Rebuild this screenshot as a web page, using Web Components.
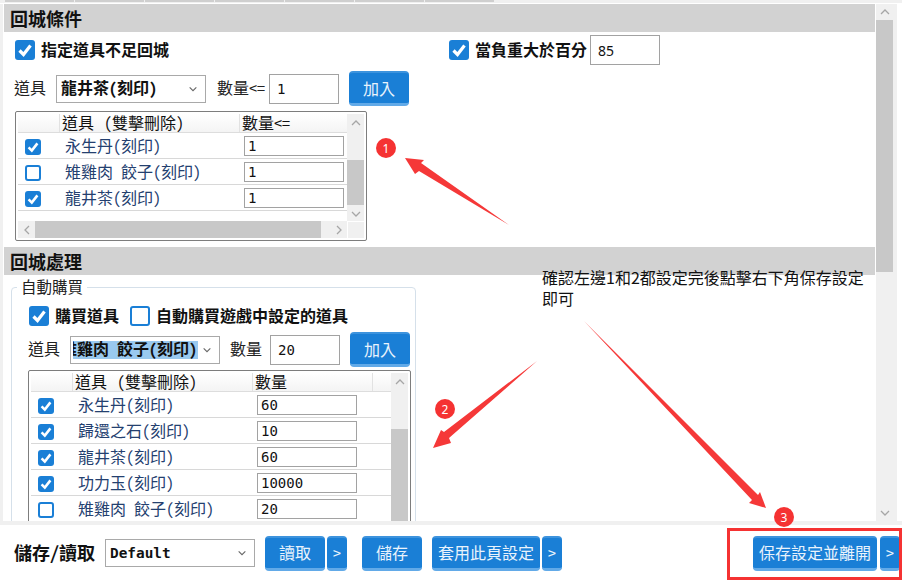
<!DOCTYPE html>
<html lang="zh-Hant">
<head>
<meta charset="utf-8">
<title>回城設定</title>
<style>
  html, body { margin: 0; padding: 0; background: #fff; }
  body {
    font-family: "Noto Sans CJK TC", "DejaVu Sans Mono", sans-serif;
    font-size: 16px;
    font-feature-settings: "hwid";
    color: #111;
    overflow: hidden;
  }
</style>
</head>
<body>
<settings-page></settings-page>

<template id="page-tpl">
  <style>
    :host { display: block; position: relative; width: 902px; height: 581px; overflow: hidden; background: #fff; }
    .tabs { height: 4px; box-sizing: border-box; border-top: 2px solid transparent; background: #f0f0f0; border-bottom: 1px solid #fff; position: relative; }
    .tab-row { display: flex; gap: 1px; position: absolute; left: 5px; top: -2px; }
    .tab-row i { width: 69px; height: 2px; background: #cfcfcf; }
    .middle { display: flex; height: 517px; }
    .gutter { width: 3px; background: #f0f0f0; border-right: 1px solid #fff; }
    .main { width: 871px; padding-right: 1px; overflow: hidden; background: #fff; }
    .gap { height: 4px; background: #f0f0f0; }
    .sec-body { padding: 0 0 0 11px; height: 215px; box-sizing: border-box; }
    .row-a { display: flex; align-items: center; height: 30px; padding-top: 3px; }
    .row-a .right { margin-left: 280px; }
    .auto { margin-left: 7px; width: 405px; }
    .auto-checks { display: flex; align-items: center; gap: 6px; height: 24px; padding: 1px 0 0 17px; }
    .auto-checks check-box + check-box { margin-left: 5px; }
    .t1 { margin-top: 5px; }
    .t2 { margin: 3px 0 0 16px; }
    .side { width: 21px; height: 517px; }
  </style>
  <div class="tabs"><div class="tab-row"><i></i><i></i><i></i><i></i><i></i><i></i><i></i></div></div>
  <div class="middle">
    <div class="gutter"></div>
    <div class="main">
      <section-bar>回城條件</section-bar>
      <div class="sec-body">
        <div class="row-a">
          <check-box checked bold>指定道具不足回城</check-box>
          <check-box class="right" checked bold>當負重大於百分</check-box>
          <num-input value="85" plain style="margin-left:3px"></num-input>
        </div>
        <form-row label="道具" qty="數量&lt;=" sel="龍井茶(刻印)" value="1" bold-sel style="margin:6px 0 0 -1px"></form-row>
        <item-grid class="t1" width="352" height="130" qty-col="108" qty-label="數量&lt;=" thumb-v="29,45" thumb-h="0,286">
          <grid-row name="永生丹(刻印)" value="1" checked></grid-row>
          <grid-row name="雉雞肉 餃子(刻印)" value="1"></grid-row>
          <grid-row name="龍井茶(刻印)" value="1" checked></grid-row>
        </item-grid>
      </div>
      <section-bar>回城處理</section-bar>
      <group-box class="auto" legend="自動購買">
        <div class="auto-checks">
          <check-box checked bold>購買道具</check-box>
          <check-box bold>自動購買遊戲中設定的道具</check-box>
        </div>
        <form-row label="道具" qty="數量" sel="雉雞肉 餃子(刻印)" value="20" bold-sel selected style="margin:4px 0 0 16px"></form-row>
        <item-grid class="t2" width="383" height="200" qty-col="138" qty-label="數量" thumb-v="39,100" extra-col no-h>
          <grid-row name="永生丹(刻印)" value="60" checked></grid-row>
          <grid-row name="歸還之石(刻印)" value="10" checked></grid-row>
          <grid-row name="龍井茶(刻印)" value="60" checked></grid-row>
          <grid-row name="功力玉(刻印)" value="10000" checked></grid-row>
          <grid-row name="雉雞肉 餃子(刻印)" value="20"></grid-row>
        </item-grid>
      </group-box>
    </div>
    <scroll-bar class="side" orient="v" thumb="0,252" arrow="16" thumb-width="17"></scroll-bar>
  </div>
  <div class="gap"></div>
  <save-bar></save-bar>
  <call-outs></call-outs>
</template>

<script>
  function makeShadow(host, html) {
    host.attachShadow({ mode: 'open' });
    host.shadowRoot.innerHTML = html;
  }

  const chevrons = {
    up: '<polyline points="2,8 6,4 10,8"/>',
    down: '<polyline points="2,4 6,8 10,4"/>',
    left: '<polyline points="8,2 4,6 8,10"/>',
    right: '<polyline points="4,2 8,6 4,10"/>',
  };
  function chevron(dir, color = '#a6a6a6', size = 12) {
    return `<svg width="${size}" height="${size}" viewBox="0 0 12 12" fill="none" stroke="${color}" stroke-width="1.3">${chevrons[dir]}</svg>`;
  }

  class SettingsPage extends HTMLElement {
    constructor() {
      super();
      this.attachShadow({ mode: 'open' });
      this.shadowRoot.appendChild(document.getElementById('page-tpl').content.cloneNode(true));
    }
  }

  class SectionBar extends HTMLElement {
    connectedCallback() {
      makeShadow(this, `
        <style>
          :host { display: flex; align-items: center; height: 28px; padding-left: 6px; background: #d2d2d2; font-size: 18px; font-weight: 700; color: #111; }
        </style>
        <slot></slot>`);
    }
  }

  class CheckBox extends HTMLElement {
    connectedCallback() {
      const size = this.getAttribute('size') || 20;
      const on = this.hasAttribute('checked');
      const tick = on ? '<svg viewBox="0 0 20 20" fill="none" stroke="#fff" stroke-width="3.2"><polyline points="4.5,10.5 8.5,14.5 15.5,5.5"/></svg>' : '';
      makeShadow(this, `
        <style>
          :host { display: inline-flex; align-items: center; gap: 6px; font-weight: ${this.hasAttribute('bold') ? 700 : 400}; white-space: nowrap; }
          .box { width: ${size}px; height: ${size}px; box-sizing: border-box; border-radius: 3px; background: ${on ? '#1a7fd6' : '#fff'}; border: ${on ? 0 : '2px solid #1a7fd6'}; flex: none; }
          .txt { line-height: 22px; padding-bottom: 2px; }
          svg { display: block; width: 100%; height: 100%; }
        </style>
        <span class="box">${tick}</span>${this.textContent.trim() ? '<span class="txt"><slot></slot></span>' : ''}`);
    }
  }

  class NumInput extends HTMLElement {
    connectedCallback() {
      const small = this.hasAttribute('small');
      const plain = this.hasAttribute('plain');
      makeShadow(this, `
        <style>
          :host { display: inline-flex; align-items: center; box-sizing: border-box; flex: none; background: #fff;
            width: ${small ? 100 : 70}px; height: ${small ? 20 : 30}px; border: 1px solid #a2a2a2;
            padding-left: ${small ? 3 : 7}px; color: #111;
            font-family: ${plain ? '"Noto Sans", sans-serif' : '"DejaVu Sans Mono", monospace'}; font-size: 14px; }
        </style>
        <span>${this.getAttribute('value')}</span>`);
    }
  }

  class DropSelect extends HTMLElement {
    connectedCallback() {
      const bold = this.hasAttribute('bold');
      const selected = this.hasAttribute('selected');
      const mono = this.hasAttribute('mono');
      makeShadow(this, `
        <style>
          :host { display: inline-flex; align-items: center; box-sizing: border-box; flex: none; width: 150px; height: 28px; border: 1px solid #a9a9a9; background: #fff; padding-left: ${selected ? 2 : 4}px; font-weight: ${bold ? 700 : 400}; }
          .clip { width: 125px; height: 18px; line-height: 14px; white-space: pre; ${selected ? 'overflow-x: clip; background: #99c9ef;' : ''} }
          .clip span { ${selected ? 'margin-left: -12px; display: inline-block;' : ''} ${mono ? 'font-family: "DejaVu Sans Mono", monospace; font-size: 14.4px;' : ''} }
          .arrow { margin-left: auto; margin-right: 7px; display: flex; }
        </style>
        <div class="clip"><span>${this.getAttribute('text')}</span></div>
        <span class="arrow">${chevron('down', '#666', 10)}</span>`);
    }
  }

  class BlueButton extends HTMLElement {
    connectedCallback() {
      const w = this.getAttribute('w') || 60;
      makeShadow(this, `
        <style>
          :host { display: inline-flex; align-items: center; justify-content: center; box-sizing: border-box; flex: none;
            width: ${w}px; height: 35px; border-radius: 4px; background: #1a7fd6; color: #e9f3fc; font-size: 16px;
            border-top: 2px solid #3d93dd; border-bottom: 3px solid #62aae8; white-space: nowrap; padding-bottom: 1px; }
        </style>
        <slot></slot>`);
    }
  }

  class FormRow extends HTMLElement {
    connectedCallback() {
      const a = n => this.getAttribute(n);
      const wide = a('qty').length > 2;
      makeShadow(this, `
        <style>
          :host { display: flex; align-items: center; height: 35px; }
          .lab { color: #222; padding-bottom: 4px; }
          drop-select { margin-left: 10px; }
          .qty { margin-left: ${wide ? 11 : 10}px; width: ${wide ? 48 : 32}px; margin-right: ${wide ? 4 : 8}px; color: #222; white-space: nowrap; padding-bottom: 4px; }
          blue-button { margin-left: 10px; }
        </style>
        <span class="lab">${a('label')}</span>
        <drop-select text="${a('sel')}" ${this.hasAttribute('bold-sel') ? 'bold' : ''} ${this.hasAttribute('selected') ? 'selected' : ''}></drop-select>
        <span class="qty">${a('qty').replace('<', '&lt;')}</span>
        <num-input value="${a('value')}"></num-input>
        <blue-button>加入</blue-button>`);
    }
  }

  class ScrollBar extends HTMLElement {
    connectedCallback() {
      const v = this.getAttribute('orient') === 'v';
      const [start, size] = (this.getAttribute('thumb') || '0,0').split(',');
      const arrow = this.getAttribute('arrow') || 17;
      const tw = this.getAttribute('thumb-width');
      makeShadow(this, `
        <style>
          :host { display: flex; flex-direction: ${v ? 'column' : 'row'}; background: #f0f0f0; box-sizing: border-box; }
          .arrow { flex: 0 0 ${arrow}px; display: flex; align-items: center; justify-content: center; ${tw ? `width: ${tw}px;` : ''} }
          .before { flex: 0 0 ${start}px; }
          .thumb { flex: 0 0 ${size}px; background: #c8c8c8; ${tw ? `width: ${tw}px;` : ''} }
          .after { flex: 1 1 0; min-width: 0; min-height: 0; }
        </style>
        <div class="arrow">${chevron(v ? 'up' : 'left')}</div>
        <div class="before"></div><div class="thumb"></div><div class="after"></div>
        <div class="arrow">${chevron(v ? 'down' : 'right')}</div>`);
    }
  }

  class ItemGrid extends HTMLElement {
    connectedCallback() {
      const a = n => this.getAttribute(n);
      const noH = this.hasAttribute('no-h');
      const extra = this.hasAttribute('extra-col');
      makeShadow(this, `
        <style>
          :host { display: block; box-sizing: border-box; width: ${a('width')}px; height: ${a('height')}px; border: 1px solid #7d7d7d; border-radius: 2px; padding: 2px; background: #fff; }
          .wrap { display: grid; grid-template-columns: 1fr 17px; grid-template-rows: 1fr ${noH ? '' : '17px'}; height: 100%; }
          .rows { min-width: 0; }
          .head { display: grid; grid-template-columns: 41px 180px ${extra ? '120px 1fr' : '1fr'}; height: 19px; box-sizing: border-box; border-bottom: 1px solid #ddd; background: linear-gradient(#fff, #f4f4f4); font-size: 16px; color: #111; white-space: pre; }
          .head span { border-left: 1px solid #e2e2e2; padding-left: 2px; line-height: 16px; }
          .head span:first-child { border-left: 0; }
          .corner { background: #f0f0f0; border-left: 1px solid #fff; border-top: 1px solid #fff; }
          scroll-bar { min-width: 0; min-height: 0; }
        </style>
        <div class="wrap">
          <div class="rows">
            <div class="head"><span></span><span>道具 <i style="font-style:normal;margin-left:2px">(雙擊刪除)</i></span><span>${a('qty-label').replace('<', '&lt;')}</span>${extra ? '<span></span>' : ''}</div>
            <slot></slot>
          </div>
          <scroll-bar orient="v" thumb="${a('thumb-v')}"></scroll-bar>
          ${noH ? '' : `<scroll-bar orient="h" thumb="${a('thumb-h')}"></scroll-bar><div class="corner"></div>`}
        </div>`);
    }
  }

  class GridRow extends HTMLElement {
    connectedCallback() {
      const a = n => this.getAttribute(n);
      makeShadow(this, `
        <style>
          :host { display: grid; grid-template-columns: 41px 180px 1fr; align-items: center; height: 26px; box-sizing: border-box; border-bottom: 1px solid #d8d8d8; }
          check-box { padding-left: 7px; }
          .name { padding: 0 0 4px 6px; color: #24406f; white-space: pre; }
          num-input { margin: 0 0 2px 5px; }
        </style>
        <check-box size="16" ${this.hasAttribute('checked') ? 'checked' : ''}></check-box>
        <span class="name">${a('name')}</span>
        <num-input small value="${a('value')}"></num-input>`);
    }
  }

  class GroupBox extends HTMLElement {
    connectedCallback() {
      makeShadow(this, `
        <style>
          :host { display: block; }
          fieldset { margin: 1px 0 0; padding: 5px 0 0; border: 1px solid #d5e0ea; border-radius: 4px; min-width: 0; }
          legend { margin-left: 5px; padding: 0 4px 2px; font-size: 15.5px; line-height: 20px; color: #222; }
        </style>
        <fieldset><legend>${this.getAttribute('legend')}</legend><slot></slot></fieldset>`);
    }
  }

  class SaveBar extends HTMLElement {
    connectedCallback() {
      makeShadow(this, `
        <style>
          :host { display: flex; align-items: center; height: 56px; padding: 0 2px 0 14px; box-sizing: border-box; background: #fff; }
          b { font-size: 18px; font-weight: 700; width: 91px; white-space: nowrap; padding-bottom: 3px; }
          .more { margin-left: 2px; }
          .load { margin-left: 10px; }
          .save { margin-left: 15px; }
          .apply { margin-left: 10px; }
          .leave { margin-left: auto; }
          .leave-more { margin-left: 3px; }
        </style>
        <b>儲存/讀取</b>
        <drop-select text="Default" bold mono></drop-select>
        <blue-button class="load">讀取</blue-button>
        <blue-button class="more" w="20">&gt;</blue-button>
        <blue-button class="save">儲存</blue-button>
        <blue-button class="apply" w="108">套用此頁設定</blue-button>
        <blue-button class="more" w="20">&gt;</blue-button>
        <blue-button class="leave" w="124">保存設定並離開</blue-button>
        <blue-button class="leave-more" w="20">&gt;</blue-button>`);
    }
  }

  class CallOuts extends HTMLElement {
    connectedCallback() {
      const dot = (x, y, n) => `<circle cx="${x}" cy="${y}" r="10" fill="#f53232"/><text x="${x}" y="${y + 4.5}" text-anchor="middle" font-size="12" font-family="Noto Sans, sans-serif" fill="#fff">${n}</text>`;
      makeShadow(this, `
        <style>
          :host { position: absolute; inset: 0; pointer-events: none; display: block; }
          svg { position: absolute; left: 0; top: 0; }
          .note { position: absolute; left: 542px; top: 267px; width: 330px; font-size: 16px; line-height: 21px; color: #111; font-feature-settings: normal; }
          .box { position: absolute; left: 727px; top: 528px; width: 175px; height: 52px; box-sizing: border-box; border: 3px solid #f53232; }
        </style>
        <svg width="902" height="581" fill="#f53838">
          <polygon points="509,225 421,163 424,160 405,158 415,174 419,171"/>
          <polygon points="537,361 449,438 451,443 433,448 441,430 444,432"/>
          <polygon points="584,321 758,495 760,492 766,508 749,503 752,500"/>
          ${dot(386, 148, 1)}${dot(445, 409, 2)}${dot(784, 517, 3)}
        </svg>
        <div class="note">確認左邊1和2都設定完後點擊右下角保存設定即可</div>
        <div class="box"></div>`);
    }
  }

  customElements.define('section-bar', SectionBar);
  customElements.define('check-box', CheckBox);
  customElements.define('num-input', NumInput);
  customElements.define('drop-select', DropSelect);
  customElements.define('blue-button', BlueButton);
  customElements.define('form-row', FormRow);
  customElements.define('scroll-bar', ScrollBar);
  customElements.define('item-grid', ItemGrid);
  customElements.define('grid-row', GridRow);
  customElements.define('group-box', GroupBox);
  customElements.define('save-bar', SaveBar);
  customElements.define('call-outs', CallOuts);
  customElements.define('settings-page', SettingsPage);
</script>
</body>
</html>
